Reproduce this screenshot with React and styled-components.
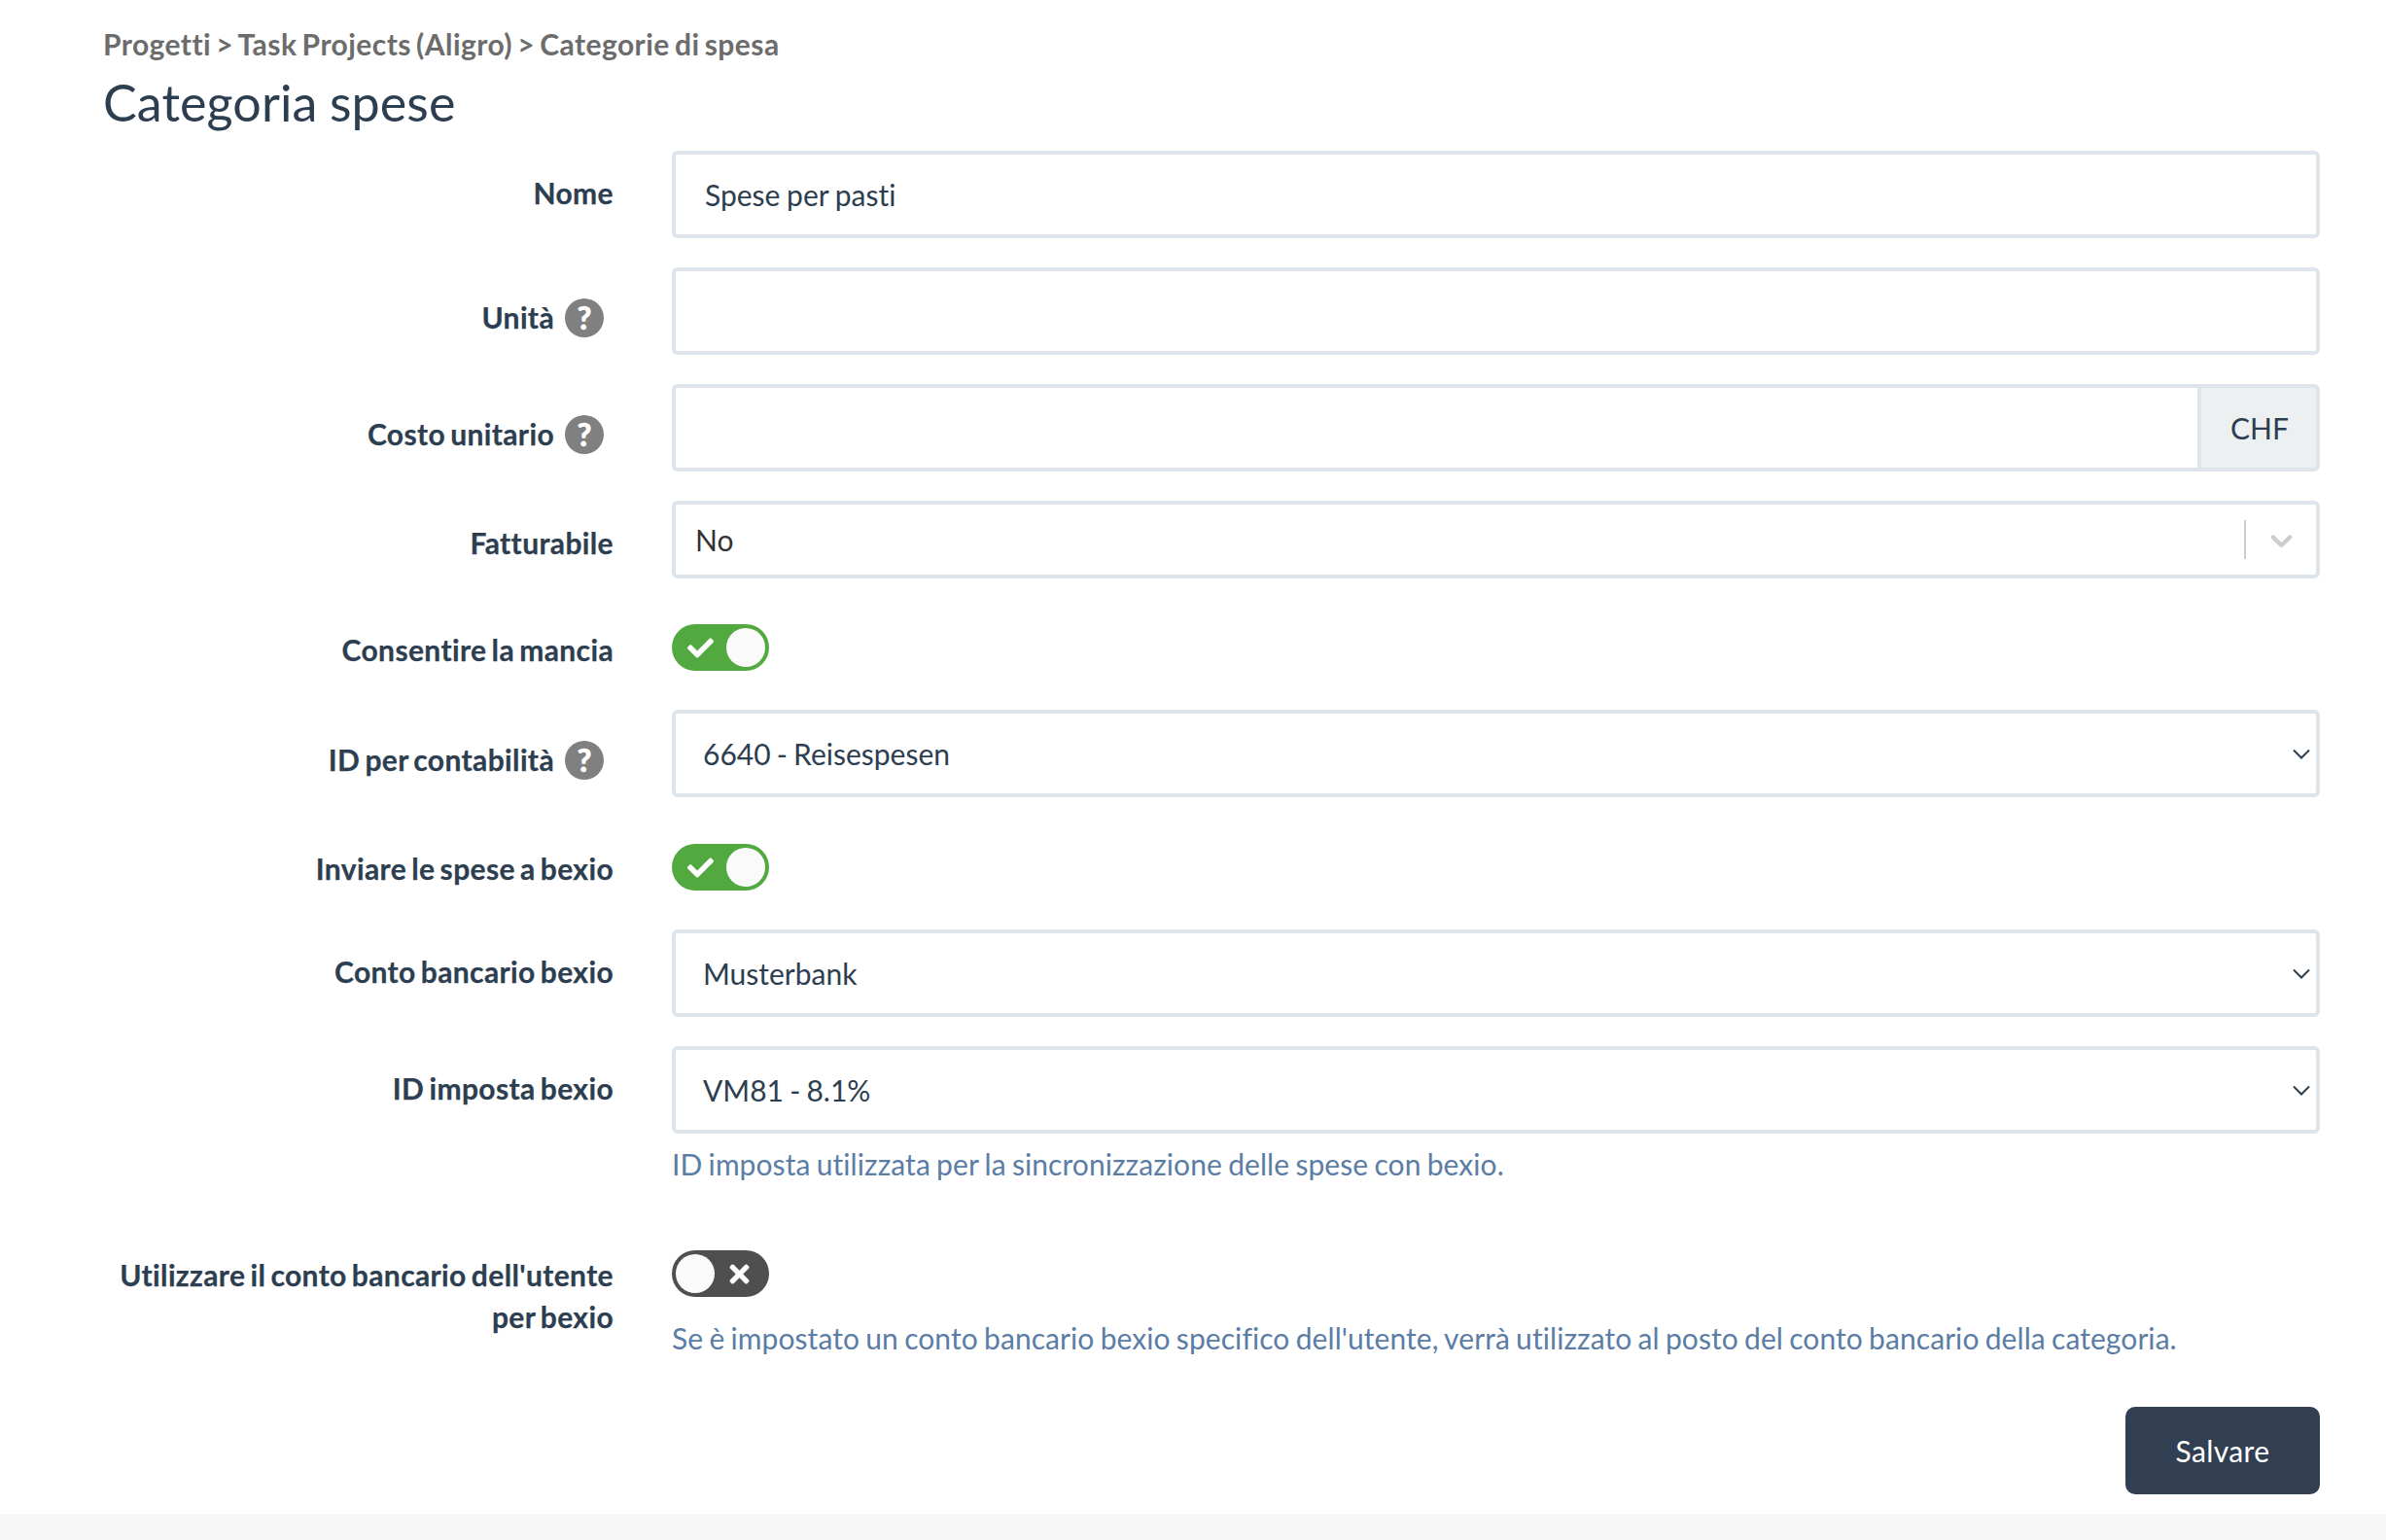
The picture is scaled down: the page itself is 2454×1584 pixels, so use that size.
import React from "react";
import styled, { createGlobalStyle } from "styled-components";
import { FaCheck, FaTimes } from "react-icons/fa";

const Global = createGlobalStyle`
  * { box-sizing: border-box; }
  html, body { margin: 0; padding: 0; background: #fff; }
  body {
    font-family: "Lato", "Noto Sans", sans-serif;
    color: #2c3e50;
    font-variant-ligatures: none;
    -webkit-font-smoothing: antialiased;
  }
`;

const Page = styled.div`
  min-height: 1584px;
  display: flex;
  flex-direction: column;
`;
const Main = styled.main`
  padding: 25px 68px 20px 106px;
`;
const Crumbs = styled.div`
  font-size: 30px;
  line-height: 40px;
  font-weight: 700;
  color: #6c6c6c;
  word-spacing: -2.5px;
  letter-spacing: 0.44px;
`;
const Title = styled.h1`
  margin: 5px 0 15px;
  font-size: 52px;
  line-height: 70px;
  font-weight: 400;
  color: #2c3e50;
  word-spacing: -1px;
  letter-spacing: 0.1px;
`;
const Row = styled.div`
  display: grid;
  grid-template-columns: 525px 1fr;
  column-gap: 60px;
  margin-bottom: ${(p) => p.$gap ?? 30}px;
`;
const Label = styled.label`
  display: flex;
  justify-content: flex-end;
  align-items: center;
  gap: 11px;
  padding-top: ${(p) => p.$top ?? 22}px;
  padding-right: ${(p) => (p.$help ? 10 : 0)}px;
  font-size: 30px;
  line-height: 43px;
  font-weight: 700;
  word-spacing: -2.5px;
  letter-spacing: 0.37px;
  text-align: right;
  align-self: start;
  color: #2c3e50;
  -webkit-text-stroke: 0.25px #2c3e50;
`;
const HelpMark = styled.span`
  flex: none;
  width: 40px;
  height: 40px;
  border-radius: 50%;
  background: #808080;
  color: #fff;
  display: flex;
  align-items: center;
  justify-content: center;
  font: 900 32px/40px "Lato", sans-serif;
  letter-spacing: 0;
  -webkit-text-stroke: 0.5px #fff;
`;
const Field = styled.div`
  min-width: 0;
  padding-top: ${(p) => p.$top ?? 0}px;
`;
const Input = styled.input`
  display: block;
  width: 100%;
  height: 90px;
  border: 4px solid #dee4ec;
  border-radius: ${(p) => (p.$grouped ? "6px 0 0 6px" : "6px")};
  padding: 0 30px;
  font: 400 30px "Lato", sans-serif;
  font-variant-ligatures: none;
  word-spacing: -1px;
  color: #2c3e50;
  background: #fff;
  outline: none;
`;
const Group = styled.div`
  display: flex;
`;
const Addon = styled.span`
  flex: none;
  width: 126px;
  height: 90px;
  display: flex;
  align-items: center;
  justify-content: center;
  padding-left: 2px;
  margin-left: -4px;
  background: #ecf0f1;
  border: 4px solid #dee4ec;
  border-radius: 0 6px 6px 0;
  font-size: 30px;
  color: #2c3e50;
`;
const Combo = styled.div`
  height: 80px;
  display: flex;
  align-items: center;
  border: 4px solid #dee4ec;
  border-radius: 6px;
  padding-left: 20px;
  font-size: 30px;
  color: #333333;
`;
const ComboValue = styled.span`
  flex: 1;
`;
const ComboDivider = styled.span`
  width: 2px;
  height: 40px;
  background: #cccccc;
`;
const ComboArrow = styled.svg`
  width: 37px;
  height: 37px;
  margin: 0 17px 0 18px;
  fill: #cccccc;
`;
const SelectBox = styled.div`
  position: relative;
  height: 90px;
`;
const Select = styled.select`
  display: block;
  width: 100%;
  height: 100%;
  appearance: none;
  border: 4px solid #dee4ec;
  border-radius: 6px;
  padding: 0 50px 0 28px;
  font: 400 30px "Lato", sans-serif;
  font-variant-ligatures: none;
  word-spacing: -1.5px;
  color: #2c3e50;
  background: #fff;
  outline: none;
`;
const Caret = styled.svg`
  position: absolute;
  right: 10px;
  top: 40px;
  width: 18px;
  height: 11px;
  fill: none;
  stroke: #2c3e50;
  stroke-width: 2;
`;
const Note = styled.div`
  margin-top: ${(p) => p.$top ?? 10}px;
  font-size: 30px;
  line-height: 43px;
  word-spacing: -1.5px;
  letter-spacing: 0.07px;
  color: #5b7da5;
`;
const Toggle = styled.span`
  display: flex;
  align-items: center;
  justify-content: space-between;
  flex-direction: ${(p) => (p.$on ? "row" : "row-reverse")};
  width: 100px;
  height: 48px;
  padding: ${(p) => (p.$on ? "0 4px 0 16px" : "0 16px 0 4px")};
  border-radius: 24px;
  background: ${(p) => (p.$on ? "#52a93f" : "#4f4f4f")};
  color: #fff;
`;
const Knob = styled.span`
  width: 40px;
  height: 40px;
  border-radius: 50%;
  background: #fafafa;
`;
const Actions = styled.div`
  display: flex;
  justify-content: flex-end;
  margin-top: 49px;
`;
const Save = styled.button`
  width: 200px;
  height: 90px;
  border: 0;
  border-radius: 10px;
  background: #323f52;
  color: #fff;
  font: 400 30px "Lato", sans-serif;
  font-variant-ligatures: none;
  letter-spacing: 0.4px;
`;
const Footer = styled.footer`
  flex: 1;
  background: #f7f7f7;
`;

const Check = () => <FaCheck size={27} />;
const Cross = () => <FaTimes size={29} />;
const Help = () => <HelpMark>?</HelpMark>;

const Sel = ({ value }) => (
  <SelectBox>
    <Select value={value} onChange={() => {}}>
      <option>{value}</option>
    </Select>
    <Caret viewBox="0 0 18 11"><path d="M1 1.5l8 8 8-8" /></Caret>
  </SelectBox>
);

export default function App() {
  return (
    <Page>
      <Global />
      <Main>
        <Crumbs>Progetti &gt; Task Projects (Aligro) &gt; Categorie di spesa</Crumbs>
        <Title>Categoria spese</Title>
        <form>
          <Row>
            <Label>Nome</Label>
            <Field><Input defaultValue="Spese per pasti" readOnly /></Field>
          </Row>
          <Row>
            <Label $top={30} $help>Unità <Help /></Label>
            <Field><Input readOnly /></Field>
          </Row>
          <Row>
            <Label $top={30} $help>Costo unitario <Help /></Label>
            <Field>
              <Group>
                <Input $grouped readOnly />
                <Addon>CHF</Addon>
              </Group>
            </Field>
          </Row>
          <Row>
            <Label>Fatturabile</Label>
            <Field>
              <Combo>
                <ComboValue>No</ComboValue>
                <ComboDivider />
                <ComboArrow viewBox="0 0 20 20">
                  <path d="M4.516 7.548c0.436-0.446 1.043-0.481 1.576 0l3.908 3.747 3.908-3.747c0.533-0.481 1.141-0.446 1.574 0 0.436 0.445 0.408 1.197 0 1.615-0.406 0.418-4.695 4.502-4.695 4.502-0.217 0.223-0.502 0.335-0.787 0.335s-0.57-0.112-0.789-0.335c0 0-4.287-4.084-4.695-4.502s-0.436-1.17 0-1.615z" />
                </ComboArrow>
              </Combo>
            </Field>
          </Row>
          <Row $gap={40}>
            <Label>Consentire la mancia</Label>
            <Field $top={17}><Toggle $on><Check /><Knob /></Toggle></Field>
          </Row>
          <Row>
            <Label $top={30} $help>ID per contabilità <Help /></Label>
            <Field><Sel value="6640 - Reisespesen" /></Field>
          </Row>
          <Row $gap={40}>
            <Label>Inviare le spese a bexio</Label>
            <Field $top={18}><Toggle $on><Check /><Knob /></Toggle></Field>
          </Row>
          <Row>
            <Label>Conto bancario bexio</Label>
            <Field><Sel value="Musterbank" /></Field>
          </Row>
          <Row $gap={51}>
            <Label>ID imposta bexio</Label>
            <Field>
              <Sel value="VM81 - 8.1%" />
              <Note>ID imposta utilizzata per la sincronizzazione delle spese con bexio.</Note>
            </Field>
          </Row>
          <Row $gap={0}>
            <Label $top={20}>Utilizzare il conto bancario dell'utente per bexio</Label>
            <Field $top={16}>
              <Toggle><Cross /><Knob /></Toggle>
              <Note $top={21}>Se è impostato un conto bancario bexio specifico dell'utente, verrà utilizzato al posto del conto bancario della categoria.</Note>
            </Field>
          </Row>
          <Actions>
            <Save type="button">Salvare</Save>
          </Actions>
        </form>
      </Main>
      <Footer />
    </Page>
  );
}
